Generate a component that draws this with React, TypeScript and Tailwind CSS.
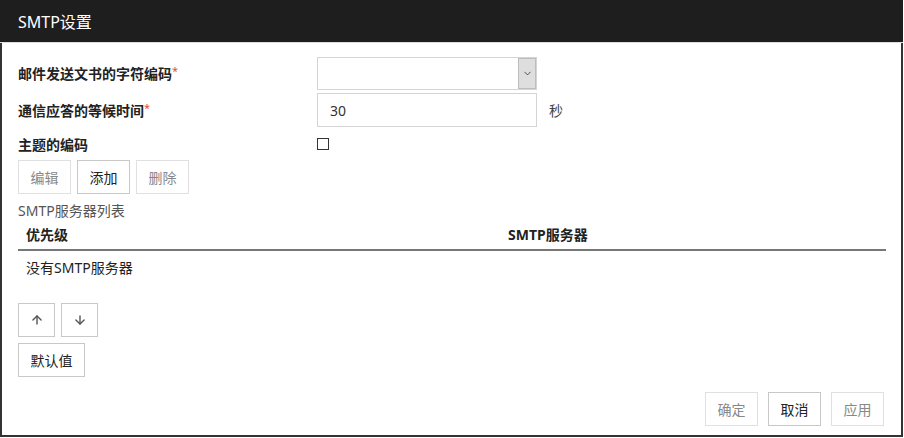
import { ChevronDown, ArrowUp, ArrowDown } from "lucide-react"

const font = { fontFamily: '"Noto Sans", "Noto Sans CJK SC", sans-serif' }

function Btn({ label, enabled, w = "w-[53px]" }: { label: React.ReactNode; enabled?: boolean; w?: string }) {
    return (
        <button
            className={
                enabled
                    ? `${w} h-[34px] flex items-center justify-center border border-[#c8c8c8] bg-white text-[14px] text-[#222]`
                    : `${w} h-[34px] flex items-center justify-center border border-[#e0e0e0] bg-white text-[14px] text-[#888]`
            }
        >
            {label}
        </button>
    )
}

export default function App() {
    return (
        <main className="w-[904px] h-[438px] bg-white" style={font}>
            <div className="w-[903px] h-[437px] border-2 border-[#333] border-t-0 flex flex-col">
                <div className="h-[43px] bg-[#1e1e1e] text-white text-[16px] flex items-center pl-[16px] pt-[2px] border-b border-[#ddd] -mx-[2px]">
                    <span className="pl-[2px]">SMTP设置</span>
                </div>
                <div className="flex-1 flex flex-col px-[16px] pt-[14px] text-[14px] text-[#222]">
                    <div className="flex items-center h-[33px]">
                        <div className="w-[299px] font-bold">
                            邮件发送文书的字符编码<span className="text-[#e0502f] font-normal align-top text-[11px]">*</span>
                        </div>
                        <div className="w-[220px] h-[33px] border border-[#d4d4d4] flex justify-end">
                            <div className="w-[18px] h-full bg-[#dedede] border border-[#bdbdbd] flex items-center justify-center">
                                <ChevronDown size={11} strokeWidth={1.8} className="text-[#333]" />
                            </div>
                        </div>
                    </div>
                    <div className="flex items-center h-[34px] mt-[3px]">
                        <div className="w-[299px] font-bold">
                            通信应答的等候时间<span className="text-[#e0502f] font-normal align-top text-[11px]">*</span>
                        </div>
                        <div className="w-[220px] h-[34px] border border-[#d4d4d4] flex items-center pl-[12px] text-[14px] text-[#333]">30</div>
                        <span className="ml-[12px] text-[#444]">秒</span>
                    </div>
                    <div className="flex items-center h-[24px] mt-[5px]">
                        <div className="w-[299px] font-bold">主题的编码</div>
                        <div className="w-[12px] h-[12px] border border-[#333] bg-white" />
                    </div>
                    <div className="flex gap-[6px] mt-[4px]">
                        <Btn label="编辑" />
                        <Btn label="添加" enabled />
                        <Btn label="删除" />
                    </div>
                    <div className="mt-[8px] text-[#555] h-[18px] leading-[18px]">SMTP服务器列表</div>
                    <div className="flex font-bold h-[31px] items-end pb-[4px] pl-[8px] border-b-2 border-[#777] w-[868px]">
                        <div className="w-[482px]">优先级</div>
                        <div>SMTP服务器</div>
                    </div>
                    <div className="pl-[8px] h-[32px] flex items-center">没有SMTP服务器</div>
                    <div className="flex gap-[6px] mt-[20px]">
                        <Btn label={<ArrowUp size={14} strokeWidth={2.4} className="text-[#555]" />} enabled w="w-[37px]" />
                        <Btn label={<ArrowDown size={14} strokeWidth={2.4} className="text-[#555]" />} enabled w="w-[37px]" />
                    </div>
                    <div className="mt-[6px]">
                        <Btn label="默认值" enabled w="w-[67px]" />
                    </div>
                    <div className="flex justify-end gap-[10px] mt-[15px] pr-[1px]">
                        <Btn label="确定" />
                        <Btn label="取消" enabled />
                        <Btn label="应用" />
                    </div>
                </div>
            </div>
        </main>
    )
}
